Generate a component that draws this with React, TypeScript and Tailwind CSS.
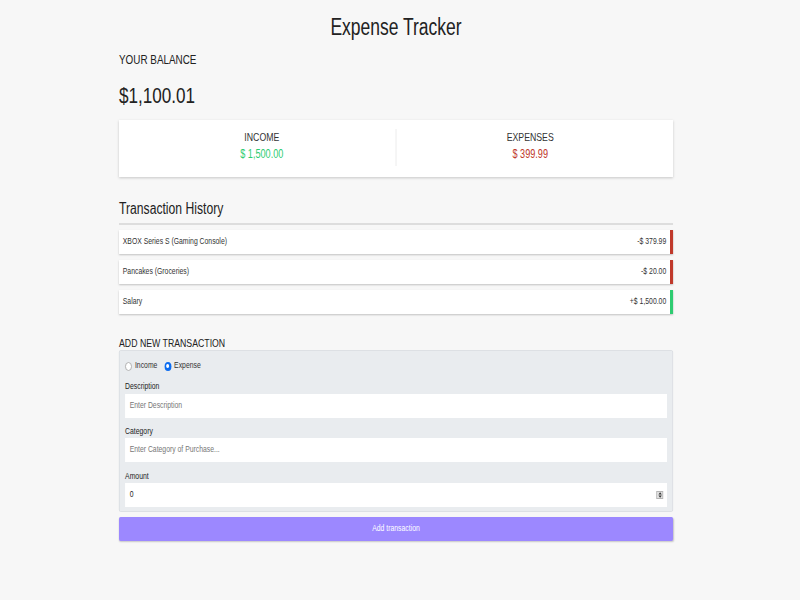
import React from "react";

const font = { fontFamily: '"Liberation Sans", Arial, sans-serif' };

type Tx = { text: string; amount: string; kind: "minus" | "plus" };

const txs: Tx[] = [
  { text: "XBOX Series S (Gaming Console)", amount: "-$ 379.99", kind: "minus" },
  { text: "Pancakes (Groceries)", amount: "-$ 20.00", kind: "minus" },
  { text: "Salary", amount: "+$ 1,500.00", kind: "plus" },
];

function Radio({ checked }: { checked?: boolean }) {
  return checked ? (
    <span className="w-[9px] h-[9px] rounded-full bg-[#0b6cf0] flex items-center justify-center">
      <span className="block w-[3.5px] h-[3.5px] rounded-full bg-white" />
    </span>
  ) : (
    <span className="w-[9px] h-[9px] rounded-full border border-[#a8a8a8] bg-white" />
  );
}

export default function App() {
  return (
    <div className="min-h-[600px] bg-[#f7f7f7] text-[#2c2c2c] overflow-hidden" style={font}>
      {/* the whole page is drawn horizontally condensed, as in the reference */}
      <div className="ml-[119px] w-[729px] pt-[14px] origin-left scale-x-[0.76]">
        <h1 className="text-center text-[23px] leading-[27px] text-[#222]">Expense Tracker</h1>
        <div className="mt-[11px] text-[13px] leading-[16px] text-[#222]">YOUR BALANCE</div>
        <div className="mt-[15px] text-[22.5px] leading-[26px] text-[#222]">$1,100.01</div>

        <div className="mt-[11px] h-[57px] bg-white shadow-[0_1px_3px_rgba(0,0,0,0.2)] flex px-[12px] pt-[9px]">
          <div className="flex-1 text-center">
            <div className="text-[11.5px] leading-[17px] text-[#333]">INCOME</div>
            <div className="text-[12px] leading-[17px] text-[#2ecc71]">$ 1,500.00</div>
          </div>
          <div className="w-[1.3px] h-[37px] bg-[#e6e6e6]" />
          <div className="flex-1 text-center">
            <div className="text-[11.5px] leading-[17px] text-[#333]">EXPENSES</div>
            <div className="text-[12px] leading-[17px] text-[#c0392b]">$ 399.99</div>
          </div>
        </div>

        <h3 className="mt-[22px] text-[16px] leading-[20px] text-[#222] border-b-2 border-[#dddddd] pb-[4px]">
          Transaction History
        </h3>

        <ul className="mt-[5px] flex flex-col gap-[6px]">
          {txs.map((t) => (
            <li
              key={t.text}
              className={
                "h-[24px] bg-white shadow-[0_1px_2px_rgba(0,0,0,0.22)] flex items-center justify-between pl-[5px] pr-[5px] text-[9px] text-[#333] border-r-[4px] " +
                (t.kind === "minus" ? "border-[#c0392b]" : "border-[#2ecc71]")
              }
            >
              <span>{t.text}</span>
              <span>{t.amount}</span>
            </li>
          ))}
        </ul>

        <div className="mt-[22px] text-[11.5px] leading-[14px] text-[#222]">ADD NEW TRANSACTION</div>

        <div className="border border-[#dadde1] bg-[#e9ecef] rounded-[2px] px-[7px] pt-[7px] pb-[4px]">
          <div className="flex items-center h-[16px] text-[9px] text-[#333]">
            <span className="flex items-center gap-[4px] mr-[9px]">
              <Radio />
              <span>Income</span>
            </span>
            <span className="flex items-center gap-[4px]">
              <Radio checked />
              <span>Expense</span>
            </span>
          </div>

          <div className="pt-[6px] pb-[2px] text-[9px] leading-[12px] text-[#222]">Description</div>
          <div className="h-[24px] bg-white flex items-center px-[6px] text-[9px] text-[#777]">Enter Description</div>

          <div className="pt-[7px] pb-[1px] text-[9px] leading-[12px] text-[#222]">Category</div>
          <div className="h-[24px] bg-white flex items-center px-[6px] text-[9px] text-[#777]">
            Enter Category of Purchase...
          </div>

          <div className="pt-[8px] pb-[1px] text-[9px] leading-[12px] text-[#222]">Amount</div>
          <div className="h-[24px] bg-white flex items-center justify-between pl-[6px] pr-[5px] text-[9px] text-[#222]">
            <span>0</span>
            <span className="w-[9px] h-[8px] bg-[#e2e2e2] border border-[#b5b5b5] flex items-center justify-center">
              <svg width="6" height="6" viewBox="0 0 6 6">
                <path d="M3 0.3 L5.2 2.4 L0.8 2.4 Z" fill="#333" />
                <path d="M3 5.7 L5.2 3.6 L0.8 3.6 Z" fill="#333" />
              </svg>
            </span>
          </div>
        </div>

        <button className="mt-[5px] w-full h-[24px] bg-[#9c88ff] text-white text-[9px] rounded-[2px] shadow-[0_1px_2px_rgba(0,0,0,0.2)]">
          Add transaction
        </button>
      </div>
    </div>
  );
}
